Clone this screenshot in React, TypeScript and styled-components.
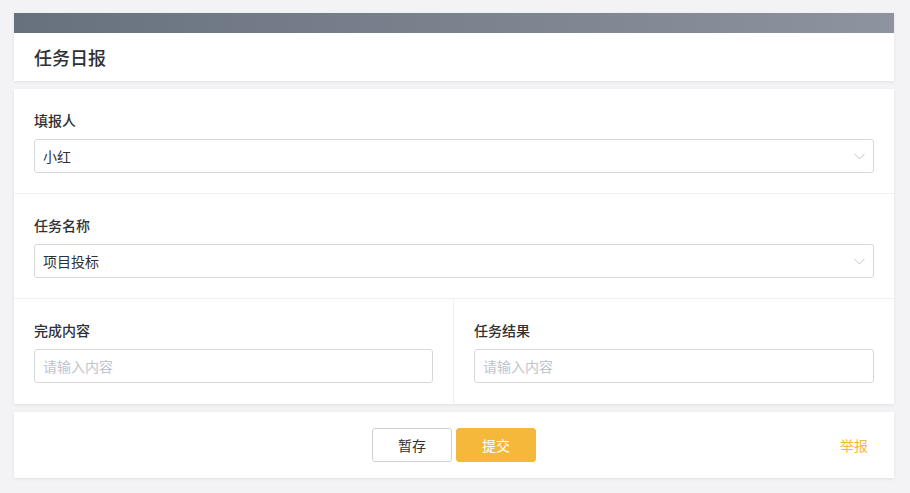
import React from 'react';
import styled, {createGlobalStyle} from "styled-components";

const GlobalStyle = createGlobalStyle`
  body {
    margin: 0;
    background: #f3f3f5;
    font-family: "Noto Sans CJK SC", "Noto Sans", sans-serif;
    color: #303133;
  }
`

const Page = styled.div`
  padding: 13px 16px 15px 14px;
  display: flex;
  flex-direction: column;
  gap: 8px;
`

const HeaderCard = styled.div`
  background: #fff;
  box-shadow: 0 1px 3px rgba(0, 0, 0, 0.08);
`

const HeaderBar = styled.div`
  height: 20px;
  background: linear-gradient(to right, #67717d, #8d939f);
`

const Title = styled.h1`
  margin: 0;
  height: 48px;
  display: flex;
  align-items: center;
  padding-left: 20px;
  font-size: 18px;
  font-weight: 500;
  color: #303133;
`

const FormCard = styled.div`
  background: #fff;
  box-shadow: 0 1px 3px rgba(0, 0, 0, 0.08);
`

const Section = styled.div<{ $last?: boolean }>`
  border-bottom: ${p => p.$last ? 'none' : '1px solid #f0f0f2'};
`

const Row = styled.div`
  display: grid;
  grid-template-columns: 1fr 1fr;
`

const Field = styled.div<{ $divider?: boolean; $bottom?: number }>`
  padding: 21px 20px ${p => p.$bottom ?? 20}px;
  border-right: ${p => p.$divider ? '1px solid #f0f0f2' : 'none'};
`

const Label = styled.div`
  font-size: 14px;
  line-height: 20px;
  font-weight: 500;
  color: #303133;
  margin-bottom: 9px;
`

const Box = styled.div<{ $placeholder?: boolean }>`
  height: 34px;
  box-sizing: border-box;
  border: 1px solid #d7d8dc;
  border-radius: 3px;
  display: flex;
  align-items: center;
  justify-content: space-between;
  padding: 0 8px 0 8px;
  font-size: 14px;
  color: ${p => p.$placeholder ? '#c0c4cc' : '#303133'};
`

const Footer = styled.div`
  background: #fff;
  box-shadow: 0 1px 3px rgba(0, 0, 0, 0.08);
  padding: 16px 26px;
  display: grid;
  grid-template-columns: 1fr auto 1fr;
  align-items: center;
`

const Buttons = styled.div`
  display: flex;
  gap: 4px;
`

const Button = styled.button<{ $primary?: boolean }>`
  width: 80px;
  height: 34px;
  border-radius: 3px;
  font-family: inherit;
  font-size: 14px;
  border: 1px solid ${p => p.$primary ? '#f4b93a' : '#d0d1d5'};
  background: ${p => p.$primary ? '#f4b93a' : '#fff'};
  color: ${p => p.$primary ? '#fff' : '#303133'};
`

const Report = styled.span`
  justify-self: end;
  font-size: 14px;
  color: #f4b93a;
`

const Chevron = () => (
    <svg width="11" height="7" viewBox="0 0 11 7" fill="none">
        <path d="M0.5 0.8 L5.5 6 L10.5 0.8" stroke="#c0c4cc" strokeWidth="1"/>
    </svg>
)

export default function App() {
    return (
        <>
            <GlobalStyle/>
            <Page>
                <HeaderCard>
                    <HeaderBar/>
                    <Title>任务日报</Title>
                </HeaderCard>
                <FormCard>
                    <Section>
                        <Field>
                            <Label>填报人</Label>
                            <Box>小红<Chevron/></Box>
                        </Field>
                    </Section>
                    <Section>
                        <Field>
                            <Label>任务名称</Label>
                            <Box>项目投标<Chevron/></Box>
                        </Field>
                    </Section>
                    <Section $last>
                        <Row>
                            <Field $divider $bottom={21}>
                                <Label>完成内容</Label>
                                <Box $placeholder>请输入内容</Box>
                            </Field>
                            <Field $bottom={21}>
                                <Label>任务结果</Label>
                                <Box $placeholder>请输入内容</Box>
                            </Field>
                        </Row>
                    </Section>
                </FormCard>
                <Footer>
                    <span/>
                    <Buttons>
                        <Button>暂存</Button>
                        <Button $primary>提交</Button>
                    </Buttons>
                    <Report>举报</Report>
                </Footer>
            </Page>
        </>
    );
}
